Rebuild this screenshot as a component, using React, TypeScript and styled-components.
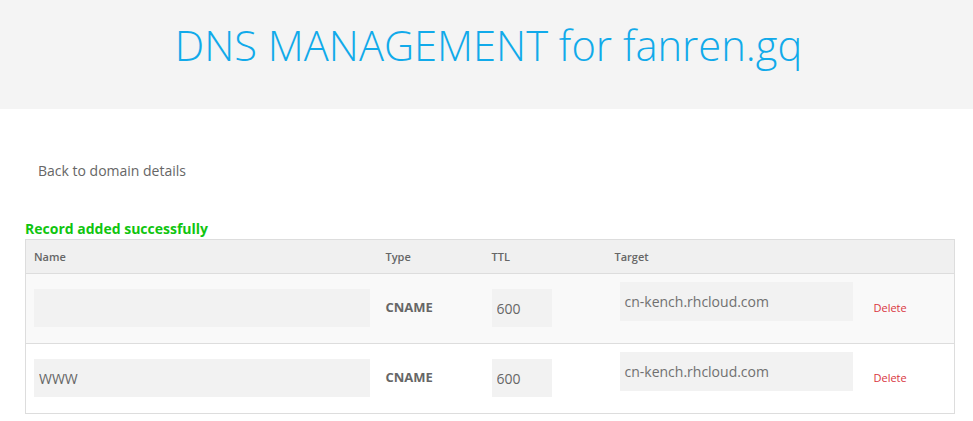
import React from "react";
import styled, { createGlobalStyle } from "styled-components";

const Global = createGlobalStyle`
  html, body { margin: 0; padding: 0; background: #fff; }
  body { font-family: "Open Sans", "Liberation Sans", sans-serif; color: #666; }
`;

const Header = styled.header`
  height: 109px;
  box-sizing: border-box;
  padding-top: 16px;
  background: #f4f4f4;
  display: flex;
  align-items: flex-start;
  justify-content: center;
`;

const Title = styled.h1`
  margin: 0 0 0 4px;
  font-weight: 300;
  font-size: 41.7px;
  line-height: normal;
  color: #11aaea;
`;

const Main = styled.main`
  padding: 0 19px 0 25px;
`;

const BackLink = styled.a`
  display: block;
  margin: 52px 0 0 13px;
  font-size: 14px;
  line-height: 20px;
  color: #666;
  text-decoration: none;
`;

const Success = styled.div`
  margin-top: 39px;
  font-size: 14px;
  font-weight: 700;
  line-height: 18px;
  color: #10c510;
`;

const Table = styled.table`
  width: 929px;
  margin-top: 1px;
  border-collapse: collapse;
  border: 1px solid #dddddd;
  table-layout: fixed;
`;

const HeadCell = styled.th<{ w: number }>`
  width: ${(p) => p.w}px;
  text-align: left;
  font-size: 11px;
  font-weight: 600;
  color: #666;
  background: #f0f0f0;
  height: 34px;
  padding: 0 8px;
  border-bottom: 1px solid #dddddd;
  box-sizing: border-box;
`;

const Row = styled.tr<{ striped?: boolean }>`
  background: ${(p) => (p.striped ? "#f9f9f9" : "#ffffff")};
  border-bottom: 1px solid #dddddd;
`;

const Cell = styled.td`
  height: 70px;
  padding: 0 8px;
  vertical-align: middle;
  box-sizing: border-box;
`;

const Input = styled.input<{ w: number }>`
  width: ${(p) => p.w}px;
  height: 38px;
  margin-top: -1px;
  box-sizing: border-box;
  border: none;
  background: #f2f2f2;
  padding: 0 5px;
  font-family: "Open Sans", "Liberation Sans", sans-serif;
  font-size: 14px;
  color: #666;
  display: block;
  outline: none;
`;

const TargetBox = styled.div`
  width: 233px;
  height: 39px;
  box-sizing: border-box;
  background: #f2f2f2;
  margin: -15px 0 0 5px;
  padding: 10px 5px 0;
  font-size: 14px;
  line-height: 20px;
  color: #707070;
`;

const TypeText = styled.span`
  display: block;
  margin-top: -3px;
  font-size: 13px;
  font-weight: 700;
  color: #666;
`;

const DeleteLink = styled.a`
  display: block;
  margin-top: -3px;
  font-size: 11px;
  color: #d9363e;
  text-decoration: none;
`;

const records = [
  { name: "", type: "CNAME", ttl: "600", target: "cn-kench.rhcloud.com" },
  { name: "WWW", type: "CNAME", ttl: "600", target: "cn-kench.rhcloud.com" },
];

export default function App() {
  return (
    <>
      <Global />
      <Header>
        <Title>DNS MANAGEMENT for fanren.gq</Title>
      </Header>
      <Main>
        <BackLink href="#">Back to domain details</BackLink>
        <Success>Record added successfully</Success>
        <Table>
          <thead>
            <tr>
              <HeadCell w={352}>Name</HeadCell>
              <HeadCell w={106}>Type</HeadCell>
              <HeadCell w={123}>TTL</HeadCell>
              <HeadCell w={259}>Target</HeadCell>
              <HeadCell w={89}></HeadCell>
            </tr>
          </thead>
          <tbody>
            {records.map((r, i) => (
              <Row key={i} striped={i % 2 === 0}>
                <Cell>
                  <Input w={336} defaultValue={r.name} />
                </Cell>
                <Cell>
                  <TypeText>{r.type}</TypeText>
                </Cell>
                <Cell>
                  <Input w={60} defaultValue={r.ttl} />
                </Cell>
                <Cell>
                  <TargetBox>{r.target}</TargetBox>
                </Cell>
                <Cell>
                  <DeleteLink href="#">Delete</DeleteLink>
                </Cell>
              </Row>
            ))}
          </tbody>
        </Table>
      </Main>
    </>
  );
}
